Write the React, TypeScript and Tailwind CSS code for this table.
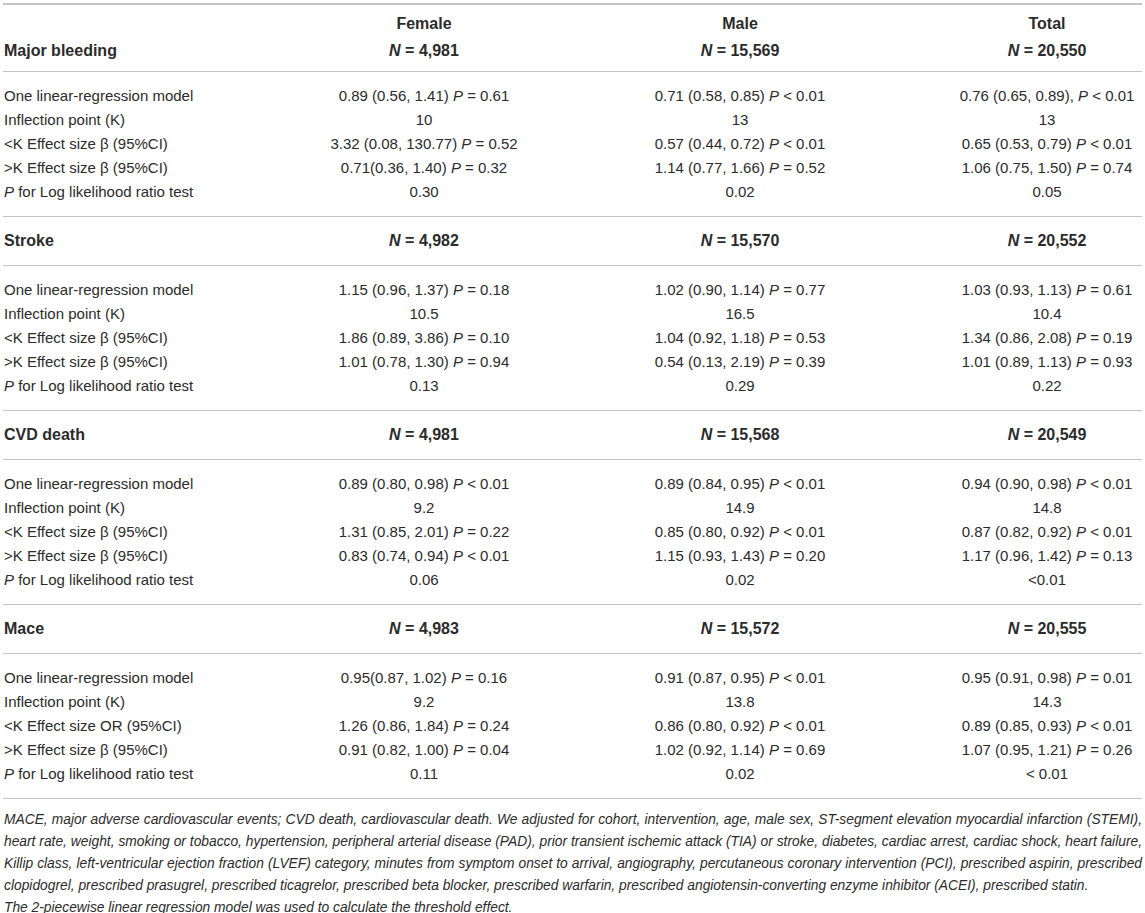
import React from "react";

type Section = {
  title: string;
  n: [string, string, string];
  rows: { label: React.ReactNode; values: [string, string, string] }[];
};

const beta = "β";

const SECTIONS: Section[] = [
  {
    title: "Major bleeding",
    n: ["4,981", "15,569", "20,550"],
    rows: [
      { label: "One linear-regression model", values: ["0.89 (0.56, 1.41) P = 0.61", "0.71 (0.58, 0.85) P < 0.01", "0.76 (0.65, 0.89), P < 0.01"] },
      { label: "Inflection point (K)", values: ["10", "13", "13"] },
      { label: `<K Effect size ${beta} (95%CI)`, values: ["3.32 (0.08, 130.77) P = 0.52", "0.57 (0.44, 0.72) P < 0.01", "0.65 (0.53, 0.79) P < 0.01"] },
      { label: `>K Effect size ${beta} (95%CI)`, values: ["0.71(0.36, 1.40) P = 0.32", "1.14 (0.77, 1.66) P = 0.52", "1.06 (0.75, 1.50) P = 0.74"] },
      { label: "LLR", values: ["0.30", "0.02", "0.05"] },
    ],
  },
  {
    title: "Stroke",
    n: ["4,982", "15,570", "20,552"],
    rows: [
      { label: "One linear-regression model", values: ["1.15 (0.96, 1.37) P = 0.18", "1.02 (0.90, 1.14) P = 0.77", "1.03 (0.93, 1.13) P = 0.61"] },
      { label: "Inflection point (K)", values: ["10.5", "16.5", "10.4"] },
      { label: `<K Effect size ${beta} (95%CI)`, values: ["1.86 (0.89, 3.86) P = 0.10", "1.04 (0.92, 1.18) P = 0.53", "1.34 (0.86, 2.08) P = 0.19"] },
      { label: `>K Effect size ${beta} (95%CI)`, values: ["1.01 (0.78, 1.30) P = 0.94", "0.54 (0.13, 2.19) P = 0.39", "1.01 (0.89, 1.13) P = 0.93"] },
      { label: "LLR", values: ["0.13", "0.29", "0.22"] },
    ],
  },
  {
    title: "CVD death",
    n: ["4,981", "15,568", "20,549"],
    rows: [
      { label: "One linear-regression model", values: ["0.89 (0.80, 0.98) P < 0.01", "0.89 (0.84, 0.95) P < 0.01", "0.94 (0.90, 0.98) P < 0.01"] },
      { label: "Inflection point (K)", values: ["9.2", "14.9", "14.8"] },
      { label: `<K Effect size ${beta} (95%CI)`, values: ["1.31 (0.85, 2.01) P = 0.22", "0.85 (0.80, 0.92) P < 0.01", "0.87 (0.82, 0.92) P < 0.01"] },
      { label: `>K Effect size ${beta} (95%CI)`, values: ["0.83 (0.74, 0.94) P < 0.01", "1.15 (0.93, 1.43) P = 0.20", "1.17 (0.96, 1.42) P = 0.13"] },
      { label: "LLR", values: ["0.06", "0.02", "<0.01"] },
    ],
  },
  {
    title: "Mace",
    n: ["4,983", "15,572", "20,555"],
    rows: [
      { label: "One linear-regression model", values: ["0.95(0.87, 1.02) P = 0.16", "0.91 (0.87, 0.95) P < 0.01", "0.95 (0.91, 0.98) P = 0.01"] },
      { label: "Inflection point (K)", values: ["9.2", "13.8", "14.3"] },
      { label: "<K Effect size OR (95%CI)", values: ["1.26 (0.86, 1.84) P = 0.24", "0.86 (0.80, 0.92) P < 0.01", "0.89 (0.85, 0.93) P < 0.01"] },
      { label: `>K Effect size ${beta} (95%CI)`, values: ["0.91 (0.82, 1.00) P = 0.04", "1.02 (0.92, 1.14) P = 0.69", "1.07 (0.95, 1.21) P = 0.26"] },
      { label: "LLR", values: ["0.11", "0.02", "< 0.01"] },
    ],
  },
];

const GRID = "grid grid-cols-[317px_208px_424px_190px]";

// italicise the statistic "P" inside a value string
function Value({ text }: { text: string }) {
  const parts = text.split(/ P (?=[=<])/);
  if (parts.length === 1) return <>{text}</>;
  return (
    <>
      {parts[0]} <i>P</i> {parts[1]}
    </>
  );
}

function Label({ label }: { label: React.ReactNode }) {
  if (label === "LLR") {
    return (
      <>
        <i>P</i> for Log likelihood ratio test
      </>
    );
  }
  return <>{label}</>;
}

function NCell({ n }: { n: string }) {
  return (
    <div className="flex items-center justify-center text-[16px] font-bold">
      <i>N</i>&nbsp;=&nbsp;{n}
    </div>
  );
}

export default function App() {
  return (
    <div
      className="w-[1145px] bg-white px-[3px] pt-[3px] text-[15px] text-[#2b2b2b]"
      style={{ fontFamily: '"Liberation Sans", Arial, sans-serif' }}
    >
      {/* Column headings */}
      <div className="border-t-2 border-b border-[#c4c4c4] pb-[7px] pt-[5px] leading-[27px]">
        <div className={`${GRID} text-[16px]`}>
          <div />
          <div className="text-center font-bold">Female</div>
          <div className="text-center font-bold">Male</div>
          <div className="text-center font-bold">Total</div>
        </div>
        <div className={GRID}>
          <div className="pl-px text-[16px] font-bold">{SECTIONS[0].title}</div>
          <NCell n={SECTIONS[0].n[0]} />
          <NCell n={SECTIONS[0].n[1]} />
          <NCell n={SECTIONS[0].n[2]} />
        </div>
      </div>

      {SECTIONS.map((s, si) => (
        <div key={s.title}>
          {si > 0 && (
            <div className={`${GRID} h-[49px] items-center border-b border-[#c4c4c4]`}>
              <div className="pl-px text-[16px] font-bold">{s.title}</div>
              <NCell n={s.n[0]} />
              <NCell n={s.n[1]} />
              <NCell n={s.n[2]} />
            </div>
          )}
          <div className="border-b border-[#c4c4c4] py-3">
            {s.rows.map((r, ri) => (
              <div key={ri} className={`${GRID} h-6 items-center whitespace-nowrap`}>
                <div className="pl-px">
                  <Label label={r.label} />
                </div>
                {r.values.map((v, vi) => (
                  <div key={vi} className="flex justify-center">
                    <span>
                      <Value text={v} />
                    </span>
                  </div>
                ))}
              </div>
            ))}
          </div>
        </div>
      ))}

      {/* Footnote */}
      <div className="pl-px pt-[10px] text-[13.8px] italic leading-[22px]">
        <div className="whitespace-nowrap text-justify [text-align-last:justify]">
          MACE, major adverse cardiovascular events; CVD death, cardiovascular death. We adjusted for cohort, intervention, age, male sex, ST-segment elevation myocardial infarction (STEMI),
        </div>
        <div className="whitespace-nowrap text-justify [text-align-last:justify]">
          heart rate, weight, smoking or tobacco, hypertension, peripheral arterial disease (PAD), prior transient ischemic attack (TIA) or stroke, diabetes, cardiac arrest, cardiac shock, heart failure,
        </div>
        <div className="whitespace-nowrap text-justify [text-align-last:justify]">
          Killip class, left-ventricular ejection fraction (LVEF) category, minutes from symptom onset to arrival, angiography, percutaneous coronary intervention (PCI), prescribed aspirin, prescribed
        </div>
        <div className="whitespace-nowrap">
          clopidogrel, prescribed prasugrel, prescribed ticagrelor, prescribed beta blocker, prescribed warfarin, prescribed angiotensin-converting enzyme inhibitor (ACEI), prescribed statin.
        </div>
        <div className="whitespace-nowrap">The 2-piecewise linear regression model was used to calculate the threshold effect.</div>
      </div>
    </div>
  );
}
